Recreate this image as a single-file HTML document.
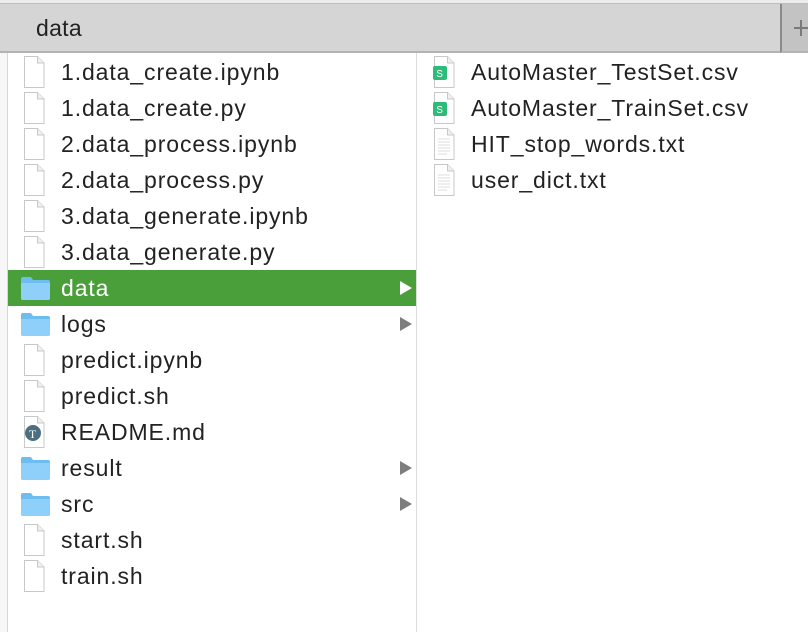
<!DOCTYPE html>
<html><head><style>
body{margin:0;width:808px;height:632px;overflow:hidden;background:#fff;font-family:"Liberation Sans",sans-serif;position:relative}
.top{position:absolute;left:0;top:0;width:808px;height:3px;background:#ececec;border-bottom:1px solid #bdbdbd}
.tab{position:absolute;left:0;top:4px;width:780px;height:47px;background:#d5d5d5;border-bottom:2px solid #b3b3b3}
.tab span{position:absolute;left:36px;top:11px;font-size:23px;letter-spacing:0.3px;color:#222}
.tab2{position:absolute;left:780px;top:4px;width:28px;height:47px;background:#c3c3c3;border-left:2px solid #8a8a8a;border-bottom:2px solid #b3b3b3}
.plus{position:absolute;left:794px;top:27px;width:14px;height:2px;background:#7a7a7a}
.plusv{position:absolute;left:800px;top:20px;width:2px;height:16px;background:#7a7a7a}
.lstrip{position:absolute;left:0;top:53px;width:7px;height:579px;background:#f7f7f7;border-right:1px solid #d8d8d8}
.div{position:absolute;left:416px;top:53px;width:1px;height:579px;background:#dcdcdc}
.row{position:absolute;height:36px;font-size:23px;letter-spacing:0.9px;color:#222;line-height:36px}
.row .t{position:absolute;left:53px;top:0;white-space:nowrap}
.row svg{position:absolute}
.sel{background:#4a9f3b;color:#fff}
.arr{position:absolute;left:392px;top:11px;width:0;height:0;border-left:12px solid #7d7d7d;border-top:7px solid transparent;border-bottom:7px solid transparent}
.sel .arr{border-left-color:#fff}
</style></head><body>
<div class="top"></div>
<div class="tab"><span>data</span></div>
<div class="tab2"></div><div class="plus"></div><div class="plusv"></div>
<div class="lstrip"></div>
<div class="div"></div>
<svg width="0" height="0" style="position:absolute"><defs>
<g id="doc"><path d="M1.5 1.5H14.5L21 8V32.5H1.5Z" fill="#fff" stroke="#c8c8c8"/><path d="M14.5 1.5V8H21" fill="#f0f0f0" stroke="#c8c8c8"/></g>
<g id="fold"><path d="M1 4Q1 2 3 2H11L13 5H28Q30 5 30 7V23Q30 25 28 25H3Q1 25 1 23Z" fill="#6dbdf2"/><path d="M1 8H30V23Q30 25 28 25H3Q1 25 1 23Z" fill="#8fd0fb"/></g>
</defs></svg>

<div class="row" style="left:8px;top:54px;width:408px"><svg style="left:15px;top:1px" width="24" height="34"><use href="#doc"/></svg><span class="t">1.data_create.ipynb</span></div>
<div class="row" style="left:8px;top:90px;width:408px"><svg style="left:15px;top:1px" width="24" height="34"><use href="#doc"/></svg><span class="t">1.data_create.py</span></div>
<div class="row" style="left:8px;top:126px;width:408px"><svg style="left:15px;top:1px" width="24" height="34"><use href="#doc"/></svg><span class="t">2.data_process.ipynb</span></div>
<div class="row" style="left:8px;top:162px;width:408px"><svg style="left:15px;top:1px" width="24" height="34"><use href="#doc"/></svg><span class="t">2.data_process.py</span></div>
<div class="row" style="left:8px;top:198px;width:408px"><svg style="left:15px;top:1px" width="24" height="34"><use href="#doc"/></svg><span class="t">3.data_generate.ipynb</span></div>
<div class="row" style="left:8px;top:234px;width:408px"><svg style="left:15px;top:1px" width="24" height="34"><use href="#doc"/></svg><span class="t">3.data_generate.py</span></div>
<div class="row sel" style="left:8px;top:270px;width:408px"><svg style="left:12px;top:5px" width="32" height="27"><use href="#fold"/></svg><span class="t">data</span><div class="arr"></div></div>
<div class="row" style="left:8px;top:306px;width:408px"><svg style="left:12px;top:5px" width="32" height="27"><use href="#fold"/></svg><span class="t">logs</span><div class="arr"></div></div>
<div class="row" style="left:8px;top:342px;width:408px"><svg style="left:15px;top:1px" width="24" height="34"><use href="#doc"/></svg><span class="t">predict.ipynb</span></div>
<div class="row" style="left:8px;top:378px;width:408px"><svg style="left:15px;top:1px" width="24" height="34"><use href="#doc"/></svg><span class="t">predict.sh</span></div>
<div class="row" style="left:8px;top:414px;width:408px"><svg style="left:15px;top:1px" width="24" height="34"><use href="#doc"/><circle cx="10" cy="18" r="8" fill="#4c6f80"/><text x="10" y="23" font-size="12" fill="#fff" text-anchor="middle" font-family="Liberation Serif">T</text></svg><span class="t">README.md</span></div>
<div class="row" style="left:8px;top:450px;width:408px"><svg style="left:12px;top:5px" width="32" height="27"><use href="#fold"/></svg><span class="t">result</span><div class="arr"></div></div>
<div class="row" style="left:8px;top:486px;width:408px"><svg style="left:12px;top:5px" width="32" height="27"><use href="#fold"/></svg><span class="t">src</span><div class="arr"></div></div>
<div class="row" style="left:8px;top:522px;width:408px"><svg style="left:15px;top:1px" width="24" height="34"><use href="#doc"/></svg><span class="t">start.sh</span></div>
<div class="row" style="left:8px;top:558px;width:408px"><svg style="left:15px;top:1px" width="24" height="34"><use href="#doc"/></svg><span class="t">train.sh</span></div>

<div class="row" style="left:418px;top:54px;width:390px"><svg style="left:15px;top:1px" width="24" height="34"><use href="#doc"/><rect x="0" y="11" width="14" height="14" rx="2" fill="#2dbb7a"/><text x="7" y="22" font-size="10" fill="#fff" text-anchor="middle">S</text></svg><span class="t">AutoMaster_TestSet.csv</span></div>
<div class="row" style="left:418px;top:90px;width:390px"><svg style="left:15px;top:1px" width="24" height="34"><use href="#doc"/><rect x="0" y="11" width="14" height="14" rx="2" fill="#2dbb7a"/><text x="7" y="22" font-size="10" fill="#fff" text-anchor="middle">S</text></svg><span class="t">AutoMaster_TrainSet.csv</span></div>
<div class="row" style="left:418px;top:126px;width:390px"><svg style="left:15px;top:1px" width="24" height="34"><use href="#doc"/><path d="M5 12H17M5 15H17M5 18H17M5 21H17M5 24H17M5 27H14" stroke="#ddd" stroke-width="1"/></svg><span class="t">HIT_stop_words.txt</span></div>
<div class="row" style="left:418px;top:162px;width:390px"><svg style="left:15px;top:1px" width="24" height="34"><use href="#doc"/><path d="M5 12H17M5 15H17M5 18H17M5 21H17M5 24H17M5 27H14" stroke="#ddd" stroke-width="1"/></svg><span class="t">user_dict.txt</span></div>
</body></html>
